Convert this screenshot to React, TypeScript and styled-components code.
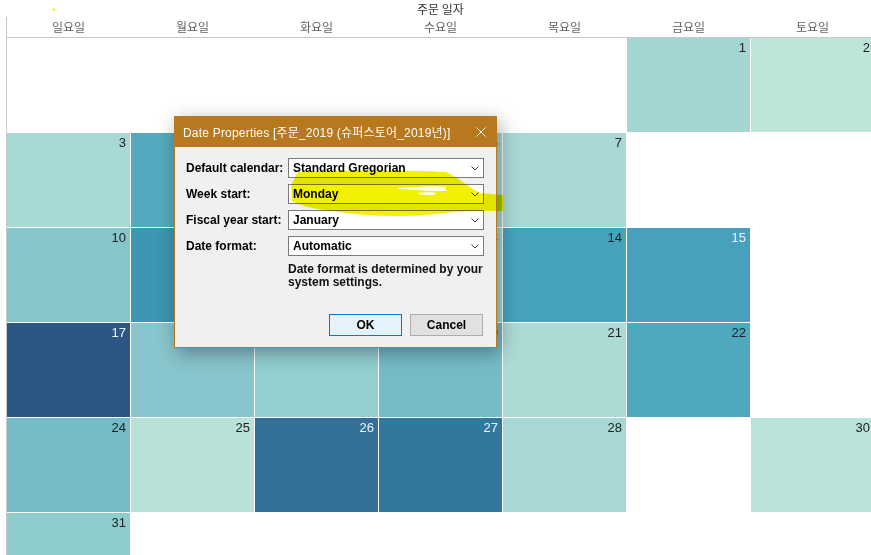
import React from "react";
import styled, { createGlobalStyle } from "styled-components";

const GlobalStyle = createGlobalStyle`
  html, body { margin: 0; padding: 0; background: #ffffff; overflow: hidden; }
  body { font-family: "Liberation Sans", "Noto Sans CJK KR", sans-serif; }
  * { box-sizing: border-box; }
`;

const Page = styled.div`
  position: relative;
  width: 871px;
  height: 555px;
  overflow: hidden;
  background: #ffffff;
`;

const Chart = styled.div`
  margin-left: 6px;
  width: 869px;
`;

const ChartTitle = styled.div`
  height: 17px;
  line-height: 17px;
  text-align: center;
  font-family: "Noto Sans CJK KR", sans-serif;
  font-size: 12px;
  color: #333333;
`;

const Frame = styled.div`
  border-left: 1px solid #c8c8c8;
  height: 538px;
`;

const WeekHeader = styled.div`
  display: grid;
  grid-template-columns: repeat(7, 123px);
  column-gap: 1px;
  height: 21px;
  border-bottom: 1px solid #c8c8c8;
`;

const WeekDay = styled.div`
  text-align: center;
  line-height: 20px;
  font-family: "Noto Sans CJK KR", sans-serif;
  font-size: 12px;
  color: #5f5f5f;
`;

const Grid = styled.div`
  display: grid;
  grid-template-columns: repeat(7, 123px);
  grid-auto-rows: 94px;
  gap: 1px;
`;

const Cell = styled.div<{ $bg: string; $light: boolean }>`
  background: ${(p) => p.$bg};
  color: ${(p) => (p.$light ? "#eef4f8" : "#222222")};
  text-align: right;
  padding: 2px 4px 0 0;
  font-family: "Liberation Sans", sans-serif;
  font-size: 13px;
  line-height: 15px;
`;

const Dialog = styled.div`
  position: absolute;
  left: 174px;
  top: 116px;
  width: 323px;
  height: 232px;
  border: 1px solid #b67a24;
  background: #f0f0f0;
  box-shadow: 3px 5px 18px rgba(0, 0, 0, 0.35);
  display: flex;
  flex-direction: column;
`;

const TitleBar = styled.div`
  height: 30px;
  background: #b8781e;
  display: flex;
  align-items: center;
  padding: 0 10px 1px 8px;
  color: #ffffff;
  font-family: "Liberation Sans", "Noto Sans CJK KR", sans-serif;
  font-size: 12px;
  letter-spacing: 0.2px;
`;

const TitleText = styled.span`
  flex: 1;
  white-space: nowrap;
`;

const CloseIcon = styled.svg`
  width: 10px;
  height: 10px;
  display: block;
`;

const Body = styled.div`
  flex: 1;
  display: flex;
  flex-direction: column;
  padding: 11px 12px 11px 11px;
`;

const FormGrid = styled.div`
  display: grid;
  grid-template-columns: 102px 196px;
  grid-auto-rows: 20px;
  row-gap: 6px;
  align-items: center;
`;

const Label = styled.div`
  font-weight: bold;
  font-size: 12px;
  color: #000000;
  white-space: nowrap;
`;

const Select = styled.div`
  height: 20px;
  border: 1px solid #7a7a7a;
  background: #ffffff;
  display: flex;
  align-items: center;
  justify-content: space-between;
  padding: 0 4px 0 4px;
  font-weight: bold;
  font-size: 12px;
  color: #000000;
`;

const Chevron = styled.svg`
  width: 8px;
  height: 5px;
  display: block;
`;

const Helper = styled.div`
  margin: 7px 0 0 102px;
  font-weight: bold;
  font-size: 12px;
  line-height: 13px;
  color: #111111;
  white-space: nowrap;
`;

const ButtonRow = styled.div`
  margin-top: auto;
  display: flex;
  justify-content: flex-end;
  gap: 8px;
  padding-right: 1px;
`;

const Button = styled.div<{ $primary?: boolean }>`
  width: 73px;
  height: 22px;
  display: flex;
  align-items: center;
  justify-content: center;
  font-weight: bold;
  font-size: 12px;
  color: #000000;
  border: 1px solid ${(p) => (p.$primary ? "#0078d7" : "#adadad")};
  background: ${(p) => (p.$primary ? "#e5f1fb" : "#e1e1e1")};
`;

const Marker = styled.svg`
  position: absolute;
  left: 0;
  top: 0;
  width: 871px;
  height: 555px;
  pointer-events: none;
  mix-blend-mode: multiply;
`;

type Day = { d: number; bg: string; light?: boolean } | null;

const colors: Record<number, [string, boolean?]> = {
  1: ["#a3d5d3"],
  2: ["#bde5da"],
  3: ["#a7d9d5"],
  4: ["#55a9be"],
  5: ["#8ccacc"],
  6: ["#a9d9d5"],
  7: ["#aad9d5"],
  10: ["#86c6ca"],
  11: ["#3e96b2"],
  12: ["#6fb8c6"],
  13: ["#a6d7d4"],
  14: ["#47a2bb"],
  15: ["#47a1bb", true],
  17: ["#2c5784", true],
  18: ["#89c5cc"],
  19: ["#93cfd0"],
  20: ["#76bcc8"],
  21: ["#acdad5"],
  22: ["#4fa8bd"],
  24: ["#74bbc7"],
  25: ["#b8e1d8"],
  26: ["#336f97", true],
  27: ["#32789c", true],
  28: ["#a7d8d5"],
  30: ["#b9e2d9"],
  31: ["#8ecccd"],
};

const weekDays = ["일요일", "월요일", "화요일", "수요일", "목요일", "금요일", "토요일"];

const cells: Day[] = Array.from({ length: 42 }, (_, i) => {
  const d = i - 4;
  if (d < 1 || d > 31) return null;
  const c = colors[d];
  if (!c) return null;
  return { d, bg: c[0], light: !!c[1] };
});

const fields = [
  ["Default calendar:", "Standard Gregorian"],
  ["Week start:", "Monday"],
  ["Fiscal year start:", "January"],
  ["Date format:", "Automatic"],
];

const ChevronIcon = () => (
  <Chevron viewBox="0 0 8 5">
    <polyline points="0.5,0.5 4,4 7.5,0.5" fill="none" stroke="#3c3c3c" strokeWidth="1" />
  </Chevron>
);

export default function App() {
  return (
    <Page>
      <GlobalStyle />
      <Chart>
        <ChartTitle>주문 일자</ChartTitle>
        <Frame>
          <WeekHeader>
            {weekDays.map((w) => (
              <WeekDay key={w}>{w}</WeekDay>
            ))}
          </WeekHeader>
          <Grid>
            {cells.map((c, i) =>
              c ? (
                <Cell key={i} $bg={c.bg} $light={!!c.light}>
                  {c.d}
                </Cell>
              ) : (
                <Cell key={i} $bg="transparent" $light={false} />
              )
            )}
          </Grid>
        </Frame>
      </Chart>

      <Dialog>
        <TitleBar>
          <TitleText>Date Properties [주문_2019 (슈퍼스토어_2019년)]</TitleText>
          <CloseIcon viewBox="0 0 10 10">
            <path d="M0.5 0.5 L9.5 9.5 M9.5 0.5 L0.5 9.5" stroke="#ffffff" strokeWidth="1" fill="none" />
          </CloseIcon>
        </TitleBar>
        <Body>
          <FormGrid>
            {fields.map(([l, v]) => (
              <React.Fragment key={l}>
                <Label>{l}</Label>
                <Select>
                  <span>{v}</span>
                  <ChevronIcon />
                </Select>
              </React.Fragment>
            ))}
          </FormGrid>
          <Helper>
            Date format is determined by your
            <br />
            system settings.
          </Helper>
          <ButtonRow>
            <Button $primary>OK</Button>
            <Button>Cancel</Button>
          </ButtonRow>
        </Body>
      </Dialog>

      <Marker viewBox="0 0 871 555">
        <path
          fillRule="evenodd"
          fill="#f2f200"
          d="M298 172 C 340 170, 410 170, 446 172 C 458 177, 466 186, 480 193 L 503 195 L 503 211 C 482 211, 462 211, 446 213 C 414 217, 380 217, 345 213 C 322 210, 302 207, 292 201 L 291 187 C 293 180, 296 176, 298 172 Z M 398 188 C 415 187, 432 186, 446 187 L 446 191 C 432 191, 415 190, 398 189 Z M 418 193 C 424 192, 432 192, 436 193 L 434 195 C 428 195, 422 195, 418 194 Z"
        />
        <path d="M54 8 L54 11 M52.5 9.5 L55.5 9.5" stroke="#f2f200" strokeWidth="1" />
      </Marker>
    </Page>
  );
}
